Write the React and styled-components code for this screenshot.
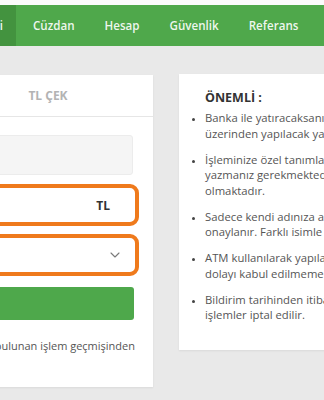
import React from "react";
import styled, { createGlobalStyle } from "styled-components";

const GlobalStyle = createGlobalStyle`
  html, body { margin: 0; padding: 0; }
  body {
    background: #e9e9e9;
    font-family: "Open Sans", "Noto Sans", "Liberation Sans", sans-serif;
    overflow: hidden;
    width: 324px;
    height: 400px;
  }
  * { box-sizing: border-box; }
`;

const TopStrip = styled.div`
  height: 5px;
  background: #fbfbfb;
`;

const NavBar = styled.nav`
  display: flex;
  height: 41px;
  background: #4fa84b;
  overflow: hidden;
`;

const ActiveClip = styled.div`
  display: flex;
  justify-content: flex-end;
  width: 16px;
  flex-shrink: 0;
  overflow: hidden;
  background: #43933f;
`;

const NavItem = styled.a`
  display: flex;
  align-items: center;
  flex-shrink: 0;
  white-space: nowrap;
  padding: ${(p) => (p.$active ? "0 13px 0 15px" : "0 15px")};
  color: rgba(255, 255, 255, 0.92);
  font-size: 11.6px;
  font-weight: 600;
  text-decoration: none;
`;

const FirstNavItem = styled(NavItem)`
  padding-left: 17px;
`;

const Content = styled.main`
  display: flex;
  align-items: flex-start;
  gap: 26px;
  padding-top: 28px;
`;

const LeftCard = styled.section`
  flex: 0 0 420px;
  margin-left: -267px;
  margin-top: 1px;
  background: #fff;
  box-shadow: 0 1px 2px rgba(0, 0, 0, 0.07);
`;

const Tabs = styled.div`
  display: flex;
  height: 42px;
  border-bottom: 1px solid #e6e6e6;
`;

const Tab = styled.div`
  flex: 1;
  display: flex;
  align-items: center;
  justify-content: center;
  font-size: 12px;
  font-weight: 700;
  color: ${(p) => (p.$active ? "#4fa84b" : "#b3b3b3")};
`;

const Body = styled.div`
  display: flex;
  flex-direction: column;
  padding: 18px 20px 33px 20px;
`;

const GrayInput = styled.div`
  height: 40px;
  background: #f5f5f5;
  border: 1px solid #ececec;
  border-radius: 3px;
`;

const Highlight = styled.div`
  display: flex;
  align-items: center;
  justify-content: flex-end;
  height: 42px;
  margin-right: -6px;
  margin-top: ${(p) => p.$mt}px;
  padding-right: ${(p) => p.$pr}px;
  border: 4px solid #ef7a1c;
  border-radius: 9px;
  background: #fff;
`;

const Suffix = styled.span`
  font-size: 12px;
  font-weight: 700;
  color: #333;
`;

const GreenButton = styled.button`
  height: 33px;
  margin-top: 11px;
  margin-right: -1px;
  border: none;
  border-radius: 3px;
  background: #4ea84b;
  color: #fff;
  font-family: inherit;
  font-size: 12px;
  font-weight: 700;
`;

const Note = styled.p`
  margin: 18px 0 0;
  text-align: right;
  white-space: nowrap;
  font-size: 11px;
  line-height: 16px;
  color: #555;
  margin-right: -2px;
`;

const RightCard = styled.aside`
  flex: 0 0 330px;
  background: #fff;
  padding: 15px 0 27px 26px;
  box-shadow: 0 1px 2px rgba(0, 0, 0, 0.07);
`;

const Title = styled.h3`
  margin: 0 0 3px;
  font-size: 12.5px;
  line-height: 18px;
  font-weight: 700;
  color: #333;
`;

const List = styled.ul`
  margin: 0;
  padding: 0;
  list-style: disc outside;
  font-size: 11.3px;
  line-height: 15.5px;
  color: #555;
  li + li { margin-top: 10.5px; }
  li::marker { color: #444; font-size: 9px; }
`;

const Line = styled.span`
  display: block;
  white-space: nowrap;
`;

const Chevron = () => (
  <svg width="10" height="6" viewBox="0 0 10 6" fill="none">
    <path d="M1 1l4 4 4-4" stroke="#7a7a7a" strokeWidth="1.1" strokeLinecap="round" strokeLinejoin="round" />
  </svg>
);

const notes = [
  [
    "Banka ile yatıracaksanız sadece kendi adınıza ait hesaplar",
    "üzerinden yapılacak yatırımlar kabul edilmektedir.",
  ],
  [
    "İşleminize özel tanımlanan referans kodunu açıklama kısmına",
    "yazmanız gerekmektedir. Aksi takdirde işleminiz gecikmeli",
    "olmaktadır.",
  ],
  [
    "Sadece kendi adınıza açılmış hesaplardan yapılan transferler",
    "onaylanır. Farklı isimle yapılan transferler iade edilir.",
  ],
  [
    "ATM kullanılarak yapılan yatırımlar kimlik tespiti yapılamadığından",
    "dolayı kabul edilmemektedir.",
  ],
  [
    "Bildirim tarihinden itibaren 24 saat içinde onaylanmayan",
    "işlemler iptal edilir.",
  ],
];

export default function App() {
  return (
    <>
      <GlobalStyle />
      <TopStrip />
      <NavBar>
        <ActiveClip>
          <NavItem $active href="#">Para İşlemleri</NavItem>
        </ActiveClip>
        <FirstNavItem href="#">Cüzdan</FirstNavItem>
        <NavItem href="#">Hesap</NavItem>
        <NavItem href="#">Güvenlik</NavItem>
        <NavItem href="#">Referans</NavItem>
        <NavItem href="#">Destek</NavItem>
      </NavBar>
      <Content>
        <LeftCard>
          <Tabs>
            <Tab $active>TL YATIR</Tab>
            <Tab>TL ÇEK</Tab>
          </Tabs>
          <Body>
            <GrayInput />
            <Highlight $mt={9} $pr={25}>
              <Suffix>TL</Suffix>
            </Highlight>
            <Highlight $mt={8} $pr={15}>
              <Chevron />
            </Highlight>
            <GreenButton>TL ÇEK</GreenButton>
            <Note>Talebinizin durumunu sayfanın altında bulunan işlem geçmişinden</Note>
          </Body>
        </LeftCard>
        <RightCard>
          <Title>ÖNEMLİ :</Title>
          <List>
            {notes.map((lines, i) => (
              <li key={i}>
                {lines.map((l, j) => (
                  <Line key={j}>{l}</Line>
                ))}
              </li>
            ))}
          </List>
        </RightCard>
      </Content>
    </>
  );
}
